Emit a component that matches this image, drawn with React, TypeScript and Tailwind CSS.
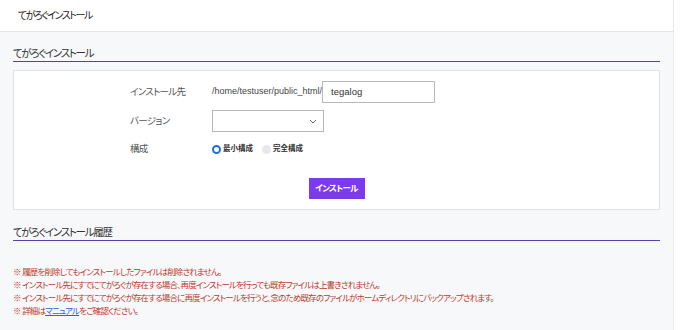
import React from "react";

const font = {
  fontFamily: '"Liberation Sans", "Noto Sans CJK JP", "Noto Sans", sans-serif',
};

export default function App() {
  return (
    <div
      className="w-[680px] h-[330px] flex bg-white overflow-hidden [font-feature-settings:'palt']"
      style={font}
    >
      <div className="w-[674px] border-r border-[#e6e8eb] bg-[#f7f8fa] flex flex-col">
        <div className="h-[32px] shrink-0 bg-white border-b border-[#e3e5e8] flex items-center pl-[18px] text-[10px] tracking-[-1.5px] text-[#222]">
          てがろぐインストール
        </div>
        <div className="px-[13px] pt-[13px]">
          <div className="border-b border-[#5b3fa6] leading-[16px] h-[17px] text-[10.5px] tracking-[-1.3px] text-[#333]">
            てがろぐインストール
          </div>
          <div className="mt-[8px] h-[140px] bg-white border border-[#dfe2e6] pt-[10px] pl-[116px] flex flex-col">
            <div className="flex items-center h-[22px]">
              <div className="w-[82px] text-[9.5px] tracking-[-0.7px] text-[#555]">インストール先</div>
              <div className="text-[9px] text-[#444]">/home/testuser/public_html/</div>
              <div className="w-[113px] h-[22px] border border-[#b8b8b8] flex items-center pl-[8px] text-[9.5px] text-[#333]">
                tegalog
              </div>
            </div>
            <div className="flex items-center h-[22px] mt-[7px]">
              <div className="w-[82px] text-[9.5px] tracking-[-0.7px] text-[#555]">バージョン</div>
              <div className="w-[112px] h-[22px] border border-[#b8b8b8] flex items-center justify-end pr-[6px]">
                <svg width="8" height="5" viewBox="0 0 8 5" fill="none">
                  <path d="M1 1l3 3 3-3" stroke="#666" strokeWidth="1" />
                </svg>
              </div>
            </div>
            <div className="flex items-center h-[14px] mt-[10px]">
              <div className="w-[82px] text-[9.5px] tracking-[-0.7px] text-[#555]">構成</div>
              <div className="flex items-center">
                <span className="w-[9px] h-[9px] rounded-full border-[2.5px] border-[#1d6fe0] bg-white" />
                <span className="ml-[2px] text-[7.5px] font-bold text-[#333]">最小構成</span>
                <span className="ml-[9px] w-[9px] h-[9px] rounded-full bg-[#e6e8eb]" />
                <span className="ml-[2px] text-[7.5px] font-bold text-[#333]">完全構成</span>
              </div>
            </div>
            <div className="mt-[22px] -ml-[116px] flex justify-center">
              <button className="w-[56px] h-[21px] bg-[#7c3aed] text-white text-[8.5px] tracking-[-0.7px] font-bold">
                インストール
              </button>
            </div>
          </div>
          <div className="mt-[14px] border-b border-[#5b3fa6] leading-[16px] h-[17px] text-[10.5px] tracking-[-1.3px] text-[#333]">
            てがろぐインストール履歴
          </div>
          <div className="mt-[25px] text-[8.5px] tracking-[-0.85px] leading-[13px] text-[#c0392b]">
            <div>※ 履歴を削除してもインストールしたファイルは削除されません。</div>
            <div>※ インストール先にすでにてがろぐが存在する場合、再度インストールを行っても既存ファイルは上書きされません。</div>
            <div>※ インストール先にすでにてがろぐが存在する場合に再度インストールを行うと、念のため既存のファイルがホームディレクトリにバックアップされます。</div>
            <div>
              ※ 詳細は<span className="text-[#2563eb] underline">マニュアル</span>をご確認ください。
            </div>
          </div>
        </div>
      </div>
      <div className="flex-1 bg-white" />
    </div>
  );
}
